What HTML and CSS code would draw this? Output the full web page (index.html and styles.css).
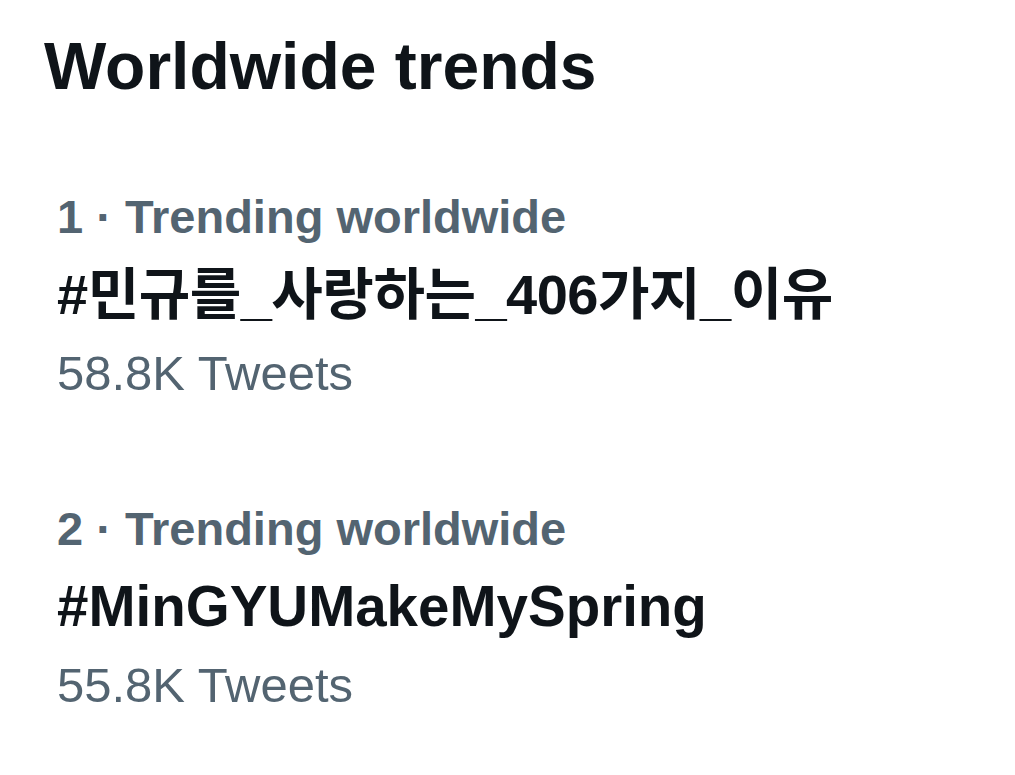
FILE: index.html
```html
<!DOCTYPE html>
<html lang="en">
<head>
<meta charset="utf-8">
<link rel="stylesheet" href="styles.css">
</head>
<body>
<main class="page">
  <h1 class="title">Worldwide trends</h1>
  <ul class="trends">
    <li class="trend">
      <div class="meta">1 · Trending worldwide</div>
      <div class="tag tag-ko">#민규를_사랑하는_406가지_이유</div>
      <div class="count">58.8K Tweets</div>
    </li>
    <li class="trend">
      <div class="meta">2 · Trending worldwide</div>
      <div class="tag">#MinGYUMakeMySpring</div>
      <div class="count">55.8K Tweets</div>
    </li>
  </ul>
</main>
</body>
</html>
```
FILE: styles.css
```css
html, body { margin: 0; padding: 0; background: #ffffff; }
body { font-family: "Liberation Sans", "Noto Sans CJK KR", sans-serif; color: #0f1419; }
.page { padding: 22px 0 0 44px; }
.title { margin: 0; font-size: 66px; font-weight: 700; line-height: 88px; }
.trends { list-style: none; margin: 0; padding: 68px 0 0 13px; display: flex; flex-direction: column; gap: 78px; }
.trend { display: flex; flex-direction: column; }
.meta { color: #536471; font-size: 47px; font-weight: 700; line-height: 78px; white-space: nowrap; }
.tag { font-size: 56.5px; font-weight: 700; line-height: 78px; height: 78px; white-space: nowrap; }
.tag-ko { font-size: 56px; letter-spacing: -0.5px; }
.count { color: #536471; font-size: 49px; font-weight: 400; line-height: 78px; white-space: nowrap; }
```
